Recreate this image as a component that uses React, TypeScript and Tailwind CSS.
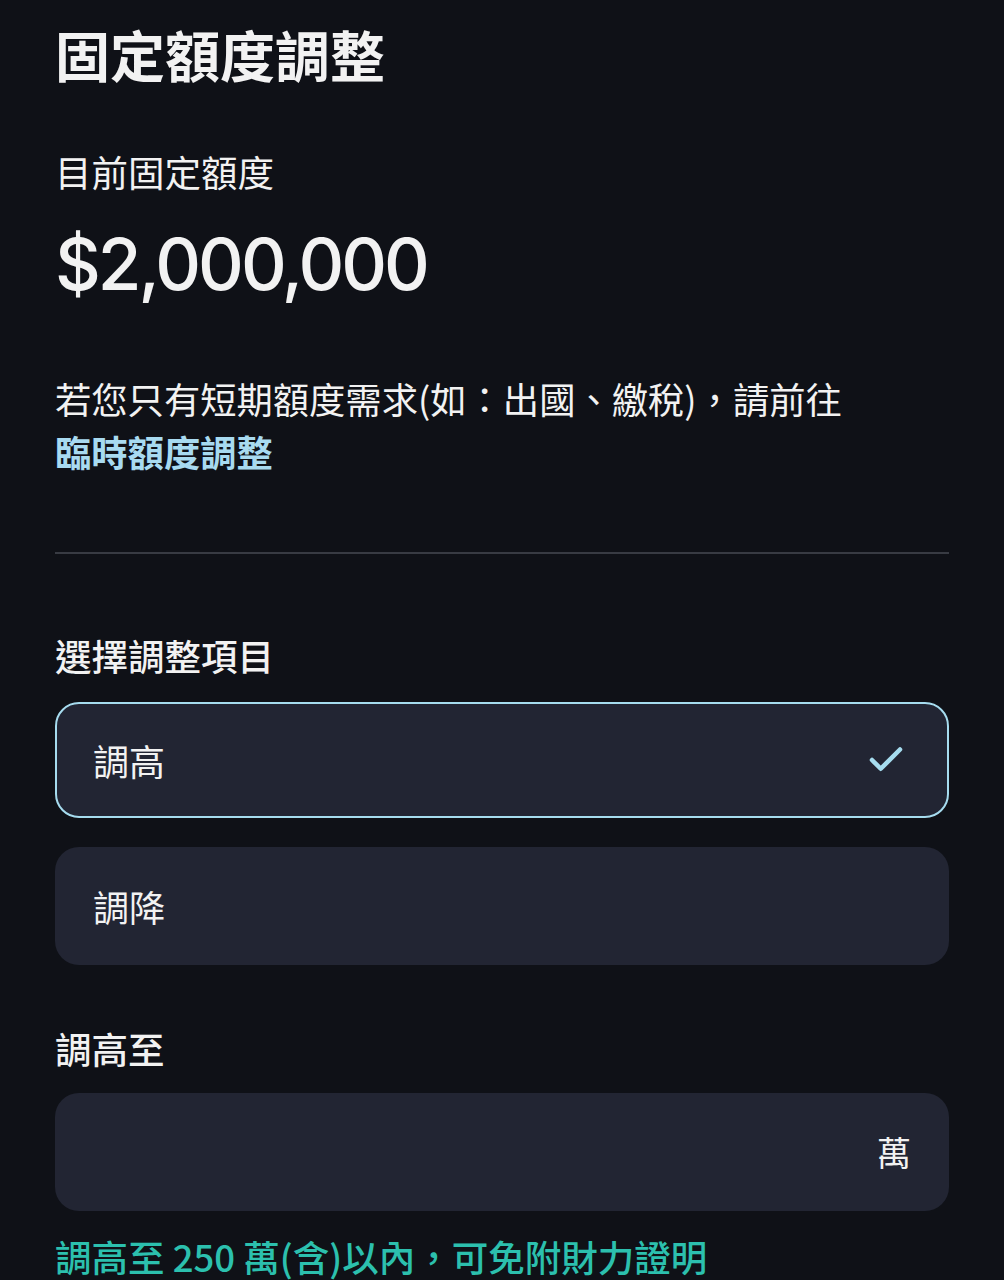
import { Check } from 'lucide-react'

const cjk = { fontFamily: '"Noto Sans CJK TC", "Noto Sans", sans-serif' }

const Option = ({ label, active }: { label: string; active?: boolean }) => {
  return (
    <div
      className={
        active
          ? 'flex h-[116px] items-center justify-between rounded-[24px] border-2 border-[#a6dcef] bg-[#222533] pl-[36px] pr-[40px]'
          : 'flex h-[118px] items-center justify-between rounded-[24px] bg-[#222533] pl-[38px] pr-[42px]'
      }
    >
      <span className="text-[36px] leading-[52px] text-[#f2f2f2]">{label}</span>
      {active && <Check className="h-[42px] w-[42px] text-[#a6dcef]" strokeWidth={2.6} />}
    </div>
  )
}

export default function App() {
  return (
    <div className="min-h-[1280px] bg-[#0f1117] px-[55px] pt-[17px] text-[#f2f2f2]" style={cjk}>
      <h1 className="text-[55px] font-bold leading-[72px]">固定額度調整</h1>

      <div className="mt-[57px] text-[36.5px] leading-[52px]">目前固定額度</div>
      <div
        className="mt-[21px] text-[71px] font-medium leading-[90px] tracking-[-3px]"
        style={{ fontFamily: 'Inter, "Noto Sans", sans-serif' }}
      >
        $2,000,000
      </div>

      <p className="mt-[63px] text-[36.3px] leading-[53px]">
        若您只有短期額度需求(如：出國、繳稅)，請前往
        <br />
        <a className="font-semibold text-[#a8daf0]">臨時額度調整</a>
      </p>

      <div className="mt-[74px] h-[2px] bg-[#383b43]" />

      <div className="mt-[76px] text-[36.5px] font-medium leading-[52px]">選擇調整項目</div>
      <div className="mt-[20px] flex flex-col gap-[29px]">
        <Option label="調高" active />
        <Option label="調降" />
      </div>

      <div className="mt-[58px] text-[36.5px] font-medium leading-[52px]">調高至</div>
      <div className="mt-[18px] flex h-[118px] items-center justify-end rounded-[24px] bg-[#222533] pr-[38px]">
        <span className="text-[34px] leading-[52px]">萬</span>
      </div>

      <div className="mt-[20px] text-[36.5px] font-medium leading-[52px] text-[#2cc0ae]">
        調高至 250 萬(含)以內，可免附財力證明
      </div>
    </div>
  )
}
